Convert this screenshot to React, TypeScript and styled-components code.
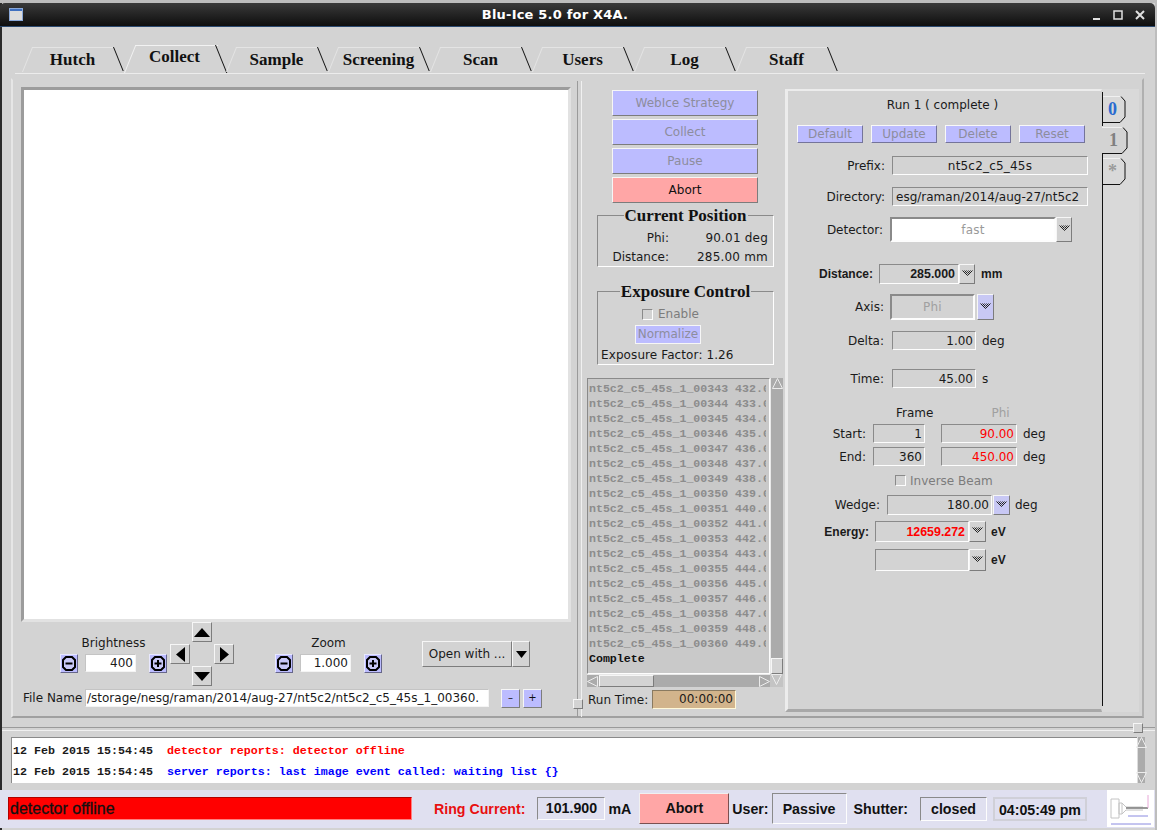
import React from "react";
import styled, { createGlobalStyle, css } from "styled-components";

const Global = createGlobalStyle`
  html, body { margin: 0; padding: 0; background: #c8c8c8; }
  * { box-sizing: border-box; }
  #root { width: 1157px; height: 830px; overflow: hidden; }
`;

const sans = `"DejaVu Sans", sans-serif`;
const helv = `"Liberation Sans", Arial, sans-serif`;
const serif = `"Liberation Serif", "Times New Roman", serif`;
const mono = `"Liberation Mono", "Courier New", monospace`;

const sunken = css`
  border: 1px solid;
  border-color: #8a8a8a #fdfdfd #fdfdfd #8a8a8a;
`;
const raised = css`
  border: 1px solid;
  border-color: #f6f6f6 #7c7c7c #7c7c7c #f6f6f6;
`;

const Page = styled.div`
  width: 1157px;
  height: 830px;
  padding-top: 3px;
  background: #bdbdbd;
  font: 12px ${sans};
  color: #1a1a1a;
`;
const Win = styled.div`
  width: 1155px;
  height: 827px;
  background: #d3d3d3;
  border-left: 2px solid #2a2a2a;
  display: flex;
  flex-direction: column;
`;
const TitleBar = styled.div`
  height: 24px;
  flex: none;
  margin-left: -2px;
  border-radius: 5px 5px 0 0;
  background: linear-gradient(#3a3a3a, #262626 45%, #0e0e0e);
  border-bottom: 1px solid #2c4a70;
  display: flex;
  align-items: center;
  padding: 0 6px 0 9px;
  color: #fff;
`;
const TitleText = styled.div`
  flex: 1;
  text-align: center;
  font: bold 13px ${sans};
  padding-right: 6px;
  letter-spacing: 0.2px;
`;
const TabBar = styled.div`
  height: 47px;
  flex: none;
  margin-left: 13px;
  margin-right: 10px;
  padding-left: 7px;
  border-bottom: 1px solid #ececec;
  display: flex;
  align-items: flex-end;
`;
const Tab = styled.div<{ $active?: boolean }>`
  position: relative;
  width: 102px;
  height: ${(p) => (p.$active ? 28 : 26)}px;
  font: bold 17px ${serif};
  color: #111;
  text-align: center;
  line-height: ${(p) => (p.$active ? 24 : 26)}px;
  padding-right: 1px;
  &::before {
    content: "";
    position: absolute;
    left: 0;
    width: 82px;
    top: 0;
    bottom: ${(p) => (p.$active ? 0 : 1)}px;
    border-top: 1px solid ${(p) => (p.$active ? "#f2f2f2" : "#e4e4e4")};
    border-left: 1px solid ${(p) => (p.$active ? "#f2f2f2" : "#e4e4e4")};
    transform-origin: bottom left;
    transform: skewX(-22deg);
  }
  &::after {
    content: "";
    position: absolute;
    right: 10px;
    top: 0;
    width: 1px;
    height: ${(p) => (p.$active ? 28 : 24)}px;
    background: #111;
    transform-origin: top left;
    transform: skewX(22deg);
  }
`;
const Notebook = styled.div`
  margin: 4px 0 0 9px;
  width: 1133px;
  height: 640px;
  flex: none;
  border: 2px solid;
  border-color: #d3d3d3 #b0b0b0 #a0a0a0 #e6e6e6;
  padding: 9px 0 0 10px;
  display: flex;
`;
const LeftCol = styled.div`
  width: 547px;
  flex: none;
  padding-top: 1px;
`;
const Canvas = styled.div`
  width: 550px;
  height: 535px;
  margin: -3px 0 0 -2px;
  background: #fff;
  border: 3px solid;
  border-color: #9c9c9c #e2e2e2 #e2e2e2 #9c9c9c;
`;
const ControlRow = styled.div`
  margin-top: 0;
  height: 64px;
  display: flex;
  align-items: center;
  padding-left: 37px;
`;
const StepGroup = styled.div`
  width: 107px;
  display: flex;
  flex-direction: column;
  align-items: center;
  gap: 4px;
`;
const StepRow = styled.div`
  width: 100%;
  display: flex;
  align-items: center;
`;
const NumInput = styled.div`
  width: 52px;
  height: 18px;
  margin: 0 13px 0 7px;
  background: #fff;
  ${sunken};
  border-color: #c4c4c4 #f4f4f4 #f4f4f4 #c4c4c4;
  text-align: right;
  padding-right: 2px;
  line-height: 16px;
`;
const RoundBtn = styled.div`
  width: 18px;
  height: 19px;
  flex: none;
  background: #bcbcff;
  border: 1px solid;
  border-color: #e8e8ff #66668a #66668a #e8e8ff;
  display: flex;
  align-items: center;
  justify-content: center;
`;
const NavGrid = styled.div`
  width: 64px;
  height: 64px;
  margin: 0 41px 0 3px;
  display: grid;
  grid-template-columns: 20px 24px 20px;
  grid-template-rows: 20px 24px 20px;
  align-items: center;
  justify-items: center;
`;
const NavBtn = styled.div<{ $col: number; $row: number }>`
  grid-column: ${(p) => p.$col};
  grid-row: ${(p) => p.$row};
  width: 20px;
  height: 20px;
  ${raised};
  display: flex;
  align-items: center;
  justify-content: center;
`;
const OpenWith = styled.div`
  margin-left: 40px;
  display: flex;
`;
const OpenLabel = styled.div`
  width: 90px;
  height: 26px;
  ${raised};
  line-height: 24px;
  text-align: center;
`;
const OpenArrow = styled.div`
  width: 18px;
  height: 26px;
  ${raised};
  display: flex;
  align-items: center;
  justify-content: center;
`;
const FileRow = styled.div`
  margin-top: 3px;
  display: flex;
  align-items: center;
  height: 18px;
`;
const FileLabel = styled.div`
  width: 62px;
  white-space: nowrap;
`;
const FileInput = styled.div`
  width: 404px;
  height: 18px;
  background: #fff;
  ${sunken};
  border-color: #c4c4c4 #f4f4f4 #f4f4f4 #c4c4c4;
  line-height: 16px;
  padding-left: 1px;
  white-space: nowrap;
  overflow: hidden;
`;
const SmallBtn = styled.div<{ $ml: number }>`
  width: 19px;
  height: 19px;
  margin-left: ${(p) => p.$ml}px;
  background: #bcbcff;
  ${raised};
  color: #111;
  text-align: center;
  line-height: 16px;
  font-size: 10px;
`;
const Sash = styled.div`
  position: relative;
  width: 17px;
  flex: none;
  height: 636px;
  margin-top: -8px;
  &::before {
    content: "";
    position: absolute;
    left: 7px;
    top: 0;
    bottom: 0;
    width: 3px;
    border-left: 1px solid #9a9a9a;
    border-right: 1px solid #f0f0f0;
  }
`;
const SashHandle = styled.div<{ $x: number; $y: number }>`
  position: absolute;
  left: ${(p) => p.$x}px;
  top: ${(p) => p.$y}px;
  width: 10px;
  height: 10px;
  background: #d3d3d3;
  ${raised};
`;
const MidCol = styled.div`
  width: 196px;
  flex: none;
  padding-top: 1px;
`;
const ActionStack = styled.div`
  margin-left: 25px;
  width: 146px;
  display: flex;
  flex-direction: column;
  gap: 3px;
`;
const ActionBtn = styled.div<{ $abort?: boolean }>`
  height: 26px;
  background: ${(p) => (p.$abort ? "#ffa6a6" : "#bcbcff")};
  color: ${(p) => (p.$abort ? "#111" : "#8d8d9d")};
  ${raised};
  text-align: center;
  line-height: 24px;
`;
const Group = styled.div<{ $mt: number; $h: number }>`
  position: relative;
  margin: ${(p) => p.$mt}px 0 0 10px;
  width: 177px;
  height: ${(p) => p.$h}px;
  border: 1px solid;
  border-color: #8a8a8a #fff #fff #8a8a8a;
`;
const Legend = styled.div`
  position: absolute;
  top: -10px;
  left: 0;
  right: 0;
  text-align: center;
  font: bold 17px/19px ${serif};
  color: #111;
  span {
    background: #d3d3d3;
    padding: 0 1px;
  }
`;
const PosRow = styled.div<{ $mt: number }>`
  margin-top: ${(p) => p.$mt}px;
  display: flex;
  height: 16px;
  line-height: 16px;
`;
const PosLabel = styled.div`
  width: 71px;
  text-align: right;
`;
const PosValue = styled.div`
  width: 99px;
  text-align: right;
  letter-spacing: 0.2px;
`;
const EnableRow = styled.div`
  display: flex;
  align-items: center;
  margin: 15px 0 0 44px;
  height: 14px;
  gap: 5px;
  color: #7c7c7c;
`;
const Check = styled.div`
  width: 11px;
  height: 11px;
  ${sunken};
  flex: none;
`;
const NormalizeBtn = styled.div`
  margin: 4px 0 0 37px;
  width: 66px;
  height: 19px;
  background: #bcbcff;
  border: 1px solid #f6f6f6;
  color: #8d8d9d;
  text-align: center;
  line-height: 17px;
`;
const Factor = styled.div`
  margin: 3px 0 0 3px;
  line-height: 16px;
  white-space: nowrap;
  letter-spacing: 0.1px;
`;
const ListGrid = styled.div`
  margin-top: 13px;
  width: 196px;
  height: 309px;
  display: grid;
  grid-template-columns: 183px 13px;
  grid-template-rows: 296px 13px;
`;
const ListBox = styled.div`
  ${sunken};
  background: #c9c9c9;
  overflow: hidden;
  padding: 2px 0 0 1px;
  font: bold 11.6px/15px ${mono};
  color: #8c8c8c;
  white-space: nowrap;
`;
const ListText = styled.div`
  width: 177px;
  overflow: hidden;
`;
const ListDone = styled.div`
  color: #111;
`;
const VScroll = styled.div`
  background: #ababab;
  display: flex;
  flex-direction: column;
  justify-content: space-between;
  align-items: center;
  border-left: 1px solid #e8e8e8;
`;
const ScrollThumbV = styled.div`
  width: 12px;
  height: 16px;
  background: #d3d3d3;
  ${raised};
`;
const HScroll = styled.div`
  background: #ababab;
  display: flex;
  align-items: center;
  justify-content: space-between;
  border-top: 1px solid #e8e8e8;
`;
const ScrollThumbH = styled.div`
  width: 55px;
  height: 12px;
  margin-left: 1px;
  margin-right: auto;
  background: #d3d3d3;
  ${raised};
`;
const Corner = styled.div`
  background: #c4c4c4;
  display: flex;
  justify-content: center;
`;
const RunRow = styled.div`
  margin-top: 3px;
  display: flex;
  align-items: center;
  height: 19px;
  padding-left: 1px;
`;
const RunLabel = styled.div`
  width: 64px;
`;
const RunBox = styled.div`
  width: 84px;
  height: 19px;
  background: #d2b48c;
  border: 1px solid;
  border-color: #8a7a60 #fff8d8 #fff8d8 #8a7a60;
  text-align: right;
  padding-right: 2px;
  line-height: 17px;
`;
const Panel = styled.div`
  width: 317px;
  height: 623px;
  margin-left: 2px;
  flex: none;
  border-top: 2px solid #ececec;
  border-left: 3px solid #ececec;
  border-bottom: 3px solid #a8a8a8;
  border-right: 1px solid #d3d3d3;
`;
const RunTitle = styled.div`
  margin-top: 5px;
  height: 18px;
  line-height: 18px;
  text-align: center;
  padding-right: 4px;
`;
const BtnRow = styled.div`
  margin-top: 11px;
  padding-left: 9px;
  display: flex;
  gap: 8px;
`;
const MiniBtn = styled.div`
  width: 66px;
  height: 18px;
  background: #bcbcff;
  border: 1px solid;
  border-color: #f8f8f8 #74749a #74749a #f8f8f8;
  color: #8d8d9d;
  text-align: center;
  line-height: 16px;
`;
const Row = styled.div<{ $mt: number; $h: number }>`
  margin-top: ${(p) => p.$mt}px;
  height: ${(p) => p.$h}px;
  display: flex;
  align-items: center;
`;
const Label = styled.div<{ $w: number; $gap: number; $bold?: boolean }>`
  width: ${(p) => p.$w}px;
  margin-right: ${(p) => p.$gap}px;
  flex: none;
  text-align: right;
  white-space: nowrap;
  ${(p) => p.$bold && css`font: bold 12px ${helv};`}
`;
const Field = styled.div<{
  $w: number;
  $ml?: number;
  $center?: boolean;
  $color?: string;
  $bold?: boolean;
  $white?: boolean;
  $double?: boolean;
}>`
  width: ${(p) => p.$w}px;
  margin-left: ${(p) => p.$ml || 0}px;
  height: 100%;
  flex: none;
  ${sunken};
  background: ${(p) => (p.$white ? "#fff" : "#d3d3d3")};
  color: ${(p) => p.$color || "#1a1a1a"};
  padding: 0 2px;
  display: flex;
  align-items: center;
  justify-content: ${(p) => (p.$center ? "center" : "flex-end")};
  white-space: nowrap;
  overflow: hidden;
  ${(p) => p.$center && css`letter-spacing: 0.2px;`}
  ${(p) => p.$bold && css`font: bold 12.4px ${helv}; padding-right: 3px;`}
  ${(p) =>
    p.$double &&
    css`
      border: 2px solid;
      border-color: #8a8a8a #fdfdfd #fdfdfd #8a8a8a;
    `}
`;
const DirText = styled.span`
  width: 100%;
  text-align: left;
  padding-left: 1px;
`;
const DropBtn = styled.div<{ $blue?: boolean; $ml?: number; $w?: number }>`
  width: ${(p) => p.$w || 17}px;
  margin-left: ${(p) => p.$ml || 0}px;
  height: 100%;
  flex: none;
  ${raised};
  background: ${(p) => (p.$blue ? "#c8c8f4" : "#d3d3d3")};
  display: flex;
  align-items: center;
  justify-content: center;
  padding-bottom: 2px;
`;
const Unit = styled.div<{ $ml: number; $bold?: boolean }>`
  margin-left: ${(p) => p.$ml}px;
  white-space: nowrap;
  ${(p) => p.$bold && css`font: bold 12px ${helv};`}
`;
const HeaderCell = styled.div<{ $ml: number; $muted?: boolean }>`
  margin-left: ${(p) => p.$ml}px;
  color: ${(p) => (p.$muted ? "#a0a0a0" : "#1a1a1a")};
`;
const InverseRow = styled.div`
  margin-top: 8px;
  height: 13px;
  padding-left: 107px;
  display: flex;
  align-items: center;
  gap: 4px;
  color: #7c7c7c;
`;
const VTabs = styled.div`
  width: 37px;
  flex: none;
  height: 623px;
  background: #d9d9d9;
  display: flex;
  flex-direction: column;
  padding-top: 3px;
`;
const VTab = styled.div<{ $h: number; $w: number; $mt?: number; $color: string; $size: number }>`
  position: relative;
  width: ${(p) => p.$w}px;
  height: ${(p) => p.$h}px;
  margin-top: ${(p) => p.$mt || 0}px;
  flex: none;
  color: ${(p) => p.$color};
  font: bold ${(p) => p.$size}px/${(p) => p.$h}px ${serif};
  text-align: center;
  padding-right: 3px;
  span { position: relative; }
  svg { position: absolute; left: 0; top: 0; }
`;
const VLine = styled.div<{ $h?: number }>`
  flex: ${(p) => (p.$h ? "none" : 1)};
  height: ${(p) => (p.$h ? `${p.$h}px` : "auto")};
  border-left: 1px solid #111;
  margin-bottom: ${(p) => (p.$h ? 0 : 6)}px;
`;
const LogSash = styled.div`
  position: relative;
  margin-top: 9px;
  height: 4px;
  flex: none;
  border-top: 1px solid #9a9a9a;
  border-bottom: 1px solid #f0f0f0;
`;
const LogArea = styled.div`
  margin: 6px 0 0 9px;
  height: 46px;
  width: 1134px;
  flex: none;
  display: flex;
`;
const LogBox = styled.div`
  width: 1126px;
  background: #fff;
  border-top: 1px solid #8a8a8a;
  border-left: 1px solid #8a8a8a;
  padding: 3px 0 0 1px;
  font: bold 11.67px/21px ${mono};
  white-space: pre;
`;
const LogMsg = styled.span<{ $c: string }>`
  color: ${(p) => p.$c};
`;
const LogScroll = styled.div`
  width: 8px;
  background: #ababab;
  display: flex;
  flex-direction: column;
  justify-content: space-between;
  align-items: center;
  border-left: 1px solid #ddd;
`;
const Status = styled.div`
  margin-top: 7px;
  height: 38px;
  flex: none;
  margin-left: -2px;
  background: #e0e0f0;
  display: flex;
  align-items: center;
  padding: 0 0 1px 8px;
  font: bold 14.2px ${helv};
  color: #111;
`;
const Alarm = styled.div`
  width: 404px;
  height: 23px;
  background: #ff0000;
  border: 1px solid;
  border-color: #b00000 #ff8080 #ff8080 #b00000;
  padding-left: 1px;
  font-size: 16px;
  line-height: 21px;
  font-weight: normal;
  -webkit-text-stroke: 0.3px #111;
`;
const StatusText = styled.div<{ $ml: number; $color?: string }>`
  margin-left: ${(p) => p.$ml}px;
  color: ${(p) => p.$color || "#111"};
  white-space: nowrap;
`;
const StatusBox = styled.div<{ $ml: number; $w: number; $h: number; $top?: number; $flat?: boolean }>`
  margin-left: ${(p) => p.$ml}px;
  width: ${(p) => p.$w}px;
  height: ${(p) => p.$h}px;
  ${sunken};
  ${(p) => p.$flat && css`border: 2px solid #d0d0d8;`}
  text-align: center;
  line-height: ${(p) => p.$h - 2 + (p.$top || 0)}px;
  white-space: nowrap;
`;
const StatusAbort = styled.div`
  margin-left: 8px;
  width: 90px;
  height: 31px;
  background: #ffa6a6;
  border: 1px solid;
  border-color: #f0f0f0 #7c5050 #7c5050 #f0f0f0;
  text-align: center;
  line-height: 29px;
`;
const Logo = styled.div`
  margin-left: 20px;
  width: 47px;
  height: 37px;
  background: #fff;
  flex: none;
`;

const Chevrons = () => (
  <svg width="11" height="7" viewBox="0 0 11 7" fill="none" stroke="#222" strokeWidth="1">
    <path d="M0.5 0.5L5.5 5.5L10.5 0.5" />
    <path d="M2.5 0.5L5.5 3.5L8.5 0.5" />
    <path d="M4.5 0.5L5.5 1.5L6.5 0.5" />
  </svg>
);
const Tri = ({ dir, w = 16, h = 9 }: { dir: "u" | "d" | "l" | "r"; w?: number; h?: number }) => {
  if (dir === "u") return <svg width={w} height={h}><path d={`M0 ${h}H${w}L${w / 2} 0Z`} fill="#000" /></svg>;
  if (dir === "d") return <svg width={w} height={h}><path d={`M0 0H${w}L${w / 2} ${h}Z`} fill="#000" /></svg>;
  if (dir === "l") return <svg width={h} height={w}><path d={`M${h} 0V${w}L0 ${w / 2}Z`} fill="#000" /></svg>;
  return <svg width={h} height={w}><path d={`M0 0V${w}L${h} ${w / 2}Z`} fill="#000" /></svg>;
};
const RoundIcon = ({ plus }: { plus?: boolean }) => (
  <svg width="14" height="15" viewBox="0 0 14 15" fill="#c8c8f8" stroke="#000">
    <path d="M4 1H10L13 4V11L10 14H4L1 11V4Z" strokeWidth="2" />
    <path d="M3.5 7.5H10.5" strokeWidth="2" />
    {plus && <path d="M7 4V11" strokeWidth="2" />}
  </svg>
);
const Outline = ({ up, left }: { up?: boolean; left?: boolean }) => (
  <svg width="11" height="11" viewBox="0 0 11 11" fill="none" stroke="#ececec">
    {up !== undefined && <path d={up ? "M0.5 10.5H10.5L5.5 0.5Z" : "M0.5 0.5H10.5L5.5 10.5Z"} />}
    {left !== undefined && <path d={left ? "M10.5 0.5V10.5L0.5 5.5Z" : "M0.5 0.5V10.5L10.5 5.5Z"} />}
  </svg>
);
const TabShape = ({ w, h, fill, left, topDark }: { w: number; h: number; fill?: string; left?: boolean; topDark?: boolean }) => (
  <svg width={w} height={h} viewBox={`0 0 ${w} ${h}`} fill="none">
    {fill && <path d={`M0 0H${w - 5}L${w} 5V${h - 6}L${w - 6} ${h}H0Z`} fill={fill} />}
    <path d={`M0 0.5H${w - 5}`} stroke={topDark ? "#111" : "#f0f0f0"} />
    <path d={`M${w - 5} 0.5L${w - 1} 5V${h - 6}L${w - 6} ${h - 0.5}H0`} stroke="#111" />
    {left && <path d={`M0.5 0V${h}`} stroke="#111" />}
  </svg>
);

const tabs = ["Hutch", "Collect", "Sample", "Screening", "Scan", "Users", "Log", "Staff"];
const listRows = Array.from({ length: 18 }, (_, i) => {
  const n = 343 + i;
  return `nt5c2_c5_45s_1_00${n} ${n + 89}.0`;
});

export default function App() {
  return (
    <>
      <Global />
      <Page>
        <Win>
          <TitleBar>
            <svg width="14" height="13" viewBox="0 0 14 13">
              <rect width="14" height="13" fill="#dcdcdc" />
              <rect width="14" height="3" fill="#3f70c0" />
              <rect x="0.5" y="0.5" width="13" height="12" fill="none" stroke="#8aa8d8" />
            </svg>
            <TitleText>Blu-Ice 5.0 for X4A.</TitleText>
            <svg width="56" height="12" viewBox="0 0 56 12" fill="none" stroke="#e0e0e0" strokeWidth="2">
              <path d="M0 10H7" />
              <rect x="21" y="2" width="8" height="8" strokeWidth="1.5" />
              <path d="M43 2L51 10M51 2L43 10" />
            </svg>
          </TitleBar>
          <TabBar>
            {tabs.map((t) => (
              <Tab key={t} $active={t === "Collect"}>{t}</Tab>
            ))}
          </TabBar>
          <Notebook>
            <LeftCol>
              <Canvas />
              <ControlRow>
                <StepGroup>
                  Brightness
                  <StepRow>
                    <RoundBtn><RoundIcon /></RoundBtn>
                    <NumInput>400</NumInput>
                    <RoundBtn><RoundIcon plus /></RoundBtn>
                  </StepRow>
                </StepGroup>
                <NavGrid>
                  <NavBtn $col={2} $row={1}><Tri dir="u" /></NavBtn>
                  <NavBtn $col={1} $row={2}><Tri dir="l" w={15} /></NavBtn>
                  <NavBtn $col={3} $row={2}><Tri dir="r" w={15} /></NavBtn>
                  <NavBtn $col={2} $row={3}><Tri dir="d" /></NavBtn>
                </NavGrid>
                <StepGroup>
                  Zoom
                  <StepRow>
                    <RoundBtn><RoundIcon /></RoundBtn>
                    <NumInput>1.000</NumInput>
                    <RoundBtn><RoundIcon plus /></RoundBtn>
                  </StepRow>
                </StepGroup>
                <OpenWith>
                  <OpenLabel>Open with ...</OpenLabel>
                  <OpenArrow><Tri dir="d" w={11} h={7} /></OpenArrow>
                </OpenWith>
              </ControlRow>
              <FileRow>
                <FileLabel>File Name</FileLabel>
                <FileInput>/storage/nesg/raman/2014/aug-27/nt5c2/nt5c2_c5_45s_1_00360.</FileInput>
                <SmallBtn $ml={12}>–</SmallBtn>
                <SmallBtn $ml={3}>+</SmallBtn>
              </FileRow>
            </LeftCol>
            <Sash>
              <SashHandle $x={3} $y={618} />
            </Sash>
            <MidCol>
              <ActionStack>
                <ActionBtn>WebIce Strategy</ActionBtn>
                <ActionBtn>Collect</ActionBtn>
                <ActionBtn>Pause</ActionBtn>
                <ActionBtn $abort>Abort</ActionBtn>
              </ActionStack>
              <Group $mt={12} $h={52}>
                <Legend><span>Current Position</span></Legend>
                <PosRow $mt={14}>
                  <PosLabel>Phi:</PosLabel>
                  <PosValue>90.01 deg</PosValue>
                </PosRow>
                <PosRow $mt={3}>
                  <PosLabel>Distance:</PosLabel>
                  <PosValue>285.00 mm</PosValue>
                </PosRow>
              </Group>
              <Group $mt={24} $h={74}>
                <Legend><span>Exposure Control</span></Legend>
                <EnableRow><Check />Enable</EnableRow>
                <NormalizeBtn>Normalize</NormalizeBtn>
                <Factor>Exposure Factor: 1.26</Factor>
              </Group>
              <ListGrid>
                <ListBox>
                  <ListText>
                    {listRows.map((r) => <div key={r}>{r}</div>)}
                  </ListText>
                  <ListDone>Complete</ListDone>
                </ListBox>
                <VScroll>
                  <Outline up />
                  <ScrollThumbV />
                </VScroll>
                <HScroll>
                  <Outline left />
                  <ScrollThumbH />
                  <Outline left={false} />
                </HScroll>
                <Corner><Outline up={false} /></Corner>
              </ListGrid>
              <RunRow>
                <RunLabel>Run Time:</RunLabel>
                <RunBox>00:00:00</RunBox>
              </RunRow>
            </MidCol>
            <Panel>
              <RunTitle>Run 1 ( complete )</RunTitle>
              <BtnRow>
                <MiniBtn>Default</MiniBtn>
                <MiniBtn>Update</MiniBtn>
                <MiniBtn>Delete</MiniBtn>
                <MiniBtn>Reset</MiniBtn>
              </BtnRow>
              <Row $mt={13} $h={19}>
                <Label $w={97} $gap={7}>Prefix:</Label>
                <Field $w={196} $center>nt5c2_c5_45s</Field>
              </Row>
              <Row $mt={12} $h={19}>
                <Label $w={97} $gap={7}>Directory:</Label>
                <Field $w={196}><DirText>esg/raman/2014/aug-27/nt5c2</DirText></Field>
              </Row>
              <Row $mt={11} $h={25}>
                <Label $w={95} $gap={7}>Detector:</Label>
                <Field $w={166} $center $white $double $color="#9a9a9a">fast</Field>
                <DropBtn $w={16}><Chevrons /></DropBtn>
              </Row>
              <Row $mt={22} $h={20}>
                <Label $w={85} $gap={6} $bold>Distance:</Label>
                <Field $w={80} $bold>285.000</Field>
                <DropBtn $w={16}><Chevrons /></DropBtn>
                <Unit $ml={6} $bold>mm</Unit>
              </Row>
              <Row $mt={10} $h={26}>
                <Label $w={96} $gap={6}>Axis:</Label>
                <Field $w={85} $center $double $color="#a0a0a0">Phi</Field>
                <DropBtn $blue $ml={2}><Chevrons /></DropBtn>
              </Row>
              <Row $mt={11} $h={19}>
                <Label $w={96} $gap={8}>Delta:</Label>
                <Field $w={84}>1.00</Field>
                <Unit $ml={6}>deg</Unit>
              </Row>
              <Row $mt={19} $h={19}>
                <Label $w={96} $gap={8}>Time:</Label>
                <Field $w={84}>45.00</Field>
                <Unit $ml={6}>s</Unit>
              </Row>
              <Row $mt={17} $h={15}>
                <HeaderCell $ml={108}>Frame</HeaderCell>
                <HeaderCell $ml={58} $muted>Phi</HeaderCell>
              </Row>
              <Row $mt={4} $h={19}>
                <Label $w={78} $gap={7}>Start:</Label>
                <Field $w={52}>1</Field>
                <Field $w={76} $ml={16} $color="#ff0000">90.00</Field>
                <Unit $ml={6}>deg</Unit>
              </Row>
              <Row $mt={4} $h={19}>
                <Label $w={78} $gap={7}>End:</Label>
                <Field $w={52}>360</Field>
                <Field $w={76} $ml={16} $color="#ff0000">450.00</Field>
                <Unit $ml={6}>deg</Unit>
              </Row>
              <InverseRow><Check />Inverse Beam</InverseRow>
              <Row $mt={8} $h={20}>
                <Label $w={92} $gap={7}>Wedge:</Label>
                <Field $w={105}>180.00</Field>
                <DropBtn $blue $ml={1}><Chevrons /></DropBtn>
                <Unit $ml={5}>deg</Unit>
              </Row>
              <Row $mt={6} $h={21}>
                <Label $w={81} $gap={6} $bold>Energy:</Label>
                <Field $w={94} $bold $color="#ff0000">12659.272</Field>
                <DropBtn><Chevrons /></DropBtn>
                <Unit $ml={5} $bold>eV</Unit>
              </Row>
              <Row $mt={7} $h={22}>
                <Label $w={81} $gap={6} />
                <Field $w={94} />
                <DropBtn><Chevrons /></DropBtn>
                <Unit $ml={5} $bold>eV</Unit>
              </Row>
            </Panel>
            <VTabs>
              <VLine $h={4} />
              <VTab $w={24} $h={27} $color="#2a6bd0" $size={18}>
                <TabShape w={24} h={27} left />
                <span>0</span>
              </VTab>
              <VLine $h={3} />
              <VTab $w={26} $h={27} $mt={1} $color="#808080" $size={18}>
                <TabShape w={26} h={27} fill="#d3d3d3" />
                <span>1</span>
              </VTab>
              <VLine $h={4} />
              <VTab $w={24} $h={27} $color="#9a9a9a" $size={18}>
                <TabShape w={24} h={27} left />
                <span>*</span>
              </VTab>
              <VLine />
            </VTabs>
          </Notebook>
          <LogSash>
            <SashHandle $x={1131} $y={-5} />
          </LogSash>
          <LogArea>
            <LogBox>
              <div>12 Feb 2015 15:54:45  <LogMsg $c="#ff0000">detector reports: detector offline</LogMsg></div>
              <div>12 Feb 2015 15:54:45  <LogMsg $c="#0000ff">server reports: last image event called: waiting list {"{}"}</LogMsg></div>
            </LogBox>
            <LogScroll>
              <Outline up />
              <Outline up={false} />
            </LogScroll>
          </LogArea>
          <Status>
            <Alarm>detector offline</Alarm>
            <StatusText $ml={22} $color="#e81010">Ring Current:</StatusText>
            <StatusBox $ml={12} $w={68} $h={23}>101.900</StatusBox>
            <StatusText $ml={3}>mA</StatusText>
            <StatusAbort>Abort</StatusAbort>
            <StatusText $ml={3}>User:</StatusText>
            <StatusBox $ml={3} $w={75} $h={31} $top={2}>Passive</StatusBox>
            <StatusText $ml={7}>Shutter:</StatusText>
            <StatusBox $ml={12} $w={67} $h={24}>closed</StatusBox>
            <StatusBox $ml={6} $w={94} $h={24} $flat>04:05:49 pm</StatusBox>
            <Logo>
              <svg width="47" height="37" viewBox="0 0 47 37" fill="none">
                <path d="M4 9H12V28H4ZM12 13H15V24H12ZM15 13L19 17H36M15 24L19 20H36" stroke="#c4c4c4" />
                <path d="M19 18H41" stroke="#777" strokeWidth="1.5" />
                <path d="M41 5V18" stroke="#e8a8d8" />
                <path d="M4 34H44M21 26H41" stroke="#8a8ae0" />
              </svg>
            </Logo>
          </Status>
        </Win>
      </Page>
    </>
  );
}
